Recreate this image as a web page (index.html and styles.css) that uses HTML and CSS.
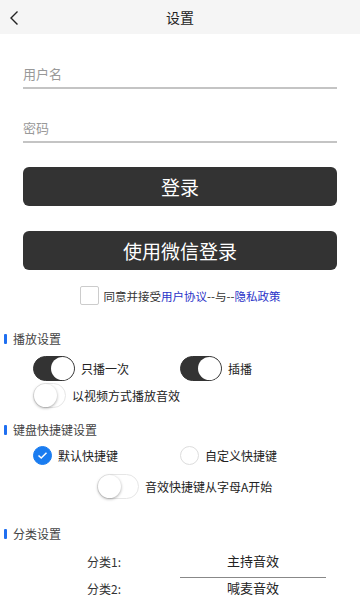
FILE: index.html
```html
<!DOCTYPE html>
<html lang="zh-CN">
<head>
  <meta charset="UTF-8">
  <meta name="viewport" content="width=device-width, initial-scale=1.0">
  <title>设置</title>
  <link rel="stylesheet" href="styles.css">
</head>
<body>

  <!-- Header -->
  <header class="topbar">
    <svg class="back" width="10" height="16" viewBox="0 0 10 16"><path d="M8.5 1.5 L2 8 L8.5 14.5" fill="none" stroke="#222" stroke-width="1.4"/></svg>
    <span class="title">设置</span>
  </header>

  <!-- Login -->
  <section class="login">
    <div class="field">用户名</div>
    <div class="field">密码</div>
    <button class="btn btn-login">登录</button>
    <button class="btn btn-wechat">使用微信登录</button>
    <div class="agree">
      <span class="box"></span>
      <span>同意并接受<a class="link">用户协议</a>--与--<a class="link">隐私政策</a></span>
    </div>
  </section>

  <!-- Play settings -->
  <section class="group">
    <h2 class="group-title">播放设置</h2>
    <div class="opts">
      <div class="opt"><span class="switch on"></span>只播一次</div>
      <div class="opt"><span class="switch on"></span>插播</div>
    </div>
    <div class="opts row2">
      <div class="opt"><span class="switch"></span>以视频方式播放音效</div>
    </div>
  </section>

  <!-- Shortcut settings -->
  <section class="group">
    <h2 class="group-title">键盘快捷键设置</h2>
    <div class="opts radios">
      <div class="opt"><span class="radio checked"><svg width="11" height="9" viewBox="0 0 11 9"><path d="M1.5 4.5 L4.2 7 L9.5 1.8" fill="none" stroke="#fff" stroke-width="1.5"/></svg></span>默认快捷键</div>
      <div class="opt"><span class="radio"></span>自定义快捷键</div>
    </div>
    <div class="opts letter">
      <div class="opt"><span class="switch"></span>音效快捷键从字母A开始</div>
    </div>
  </section>

  <!-- Category settings -->
  <section class="group cats">
    <h2 class="group-title">分类设置</h2>
    <div class="cat"><span class="cat-name">分类1:</span><span class="cat-val first">主持音效</span></div>
    <div class="cat"><span class="cat-name">分类2:</span><span class="cat-val">喊麦音效</span></div>
  </section>

</body>
</html>
```

FILE: styles.css
```css
body {
  margin: 0;
  font-family: "Noto Sans CJK SC", "Noto Sans", sans-serif;
  color: #333;
  background: #fff;
  width: 360px;
  overflow: hidden;
}
.topbar {
  position: relative;
  height: 34px;
  background: #f5f5f5;
  display: flex;
  align-items: center;
  justify-content: center;
}
.back {
  position: absolute;
  left: 9px;
  top: 10px;
}
.title {
  font-size: 14px;
  color: #222;
}
.login {
  padding: 0 23px;
}
.field {
  height: 26px;
  line-height: 26px;
  font-size: 13px;
  color: #999;
  border-bottom: 2px solid #c4c4c4;
  margin-top: 27px;
}
.field + .field {
  margin-top: 26px;
}
.btn {
  display: block;
  width: 100%;
  height: 39px;
  border: none;
  border-radius: 6px;
  background: #333;
  color: #fff;
  font-family: inherit;
  font-size: 19px;
  padding: 0;
}
.btn-login {
  margin-top: 24px;
}
.btn-wechat {
  margin-top: 25px;
}
.agree {
  display: flex;
  align-items: center;
  justify-content: center;
  gap: 5px;
  margin-top: 16px;
  font-size: 11.5px;
  color: #333;
}
.box {
  width: 17px;
  height: 17px;
  border: 1px solid #ccc;
  border-radius: 2px;
}
.link {
  color: #2b33c8;
}
.group-title {
  margin: 0;
  padding-left: 13px;
  position: relative;
  font-size: 12px;
  font-weight: normal;
  color: #444;
  line-height: 16px;
}
.group-title::before {
  content: "";
  position: absolute;
  left: 4px;
  top: 3px;
  width: 3px;
  height: 10px;
  border-radius: 1px;
  background: #1f6ff0;
}
.group {
  margin-top: 26px;
}
.group + .group {
  margin-top: 14px;
}
.opts {
  display: flex;
  padding-left: 33px;
  margin-top: 9px;
}
.opts.row2 {
  margin-top: 2px;
}
.opt {
  width: 147px;
  display: flex;
  align-items: center;
  gap: 6px;
  font-size: 12px;
  color: #222;
  white-space: nowrap;
}
.switch {
  position: relative;
  width: 42px;
  height: 25px;
  box-sizing: border-box;
  border-radius: 13px;
  border: 1px solid #e6e6e6;
  background: #fff;
}
.switch::after {
  content: "";
  position: absolute;
  top: 0;
  left: 0;
  width: 23px;
  height: 23px;
  border-radius: 50%;
  background: #fff;
  box-shadow: 0 1px 3px rgba(0, 0, 0, 0.35);
}
.switch.on {
  background: #333;
  border-color: #333;
}
.switch.on::after {
  left: auto;
  right: 0;
  box-shadow: none;
}
.radios {
  margin-top: 8px;
}
.radio {
  width: 19px;
  height: 19px;
  box-sizing: border-box;
  border-radius: 50%;
  border: 1px solid #ddd;
  display: flex;
  align-items: center;
  justify-content: center;
}
.radio.checked {
  background: #1a7cf0;
  border-color: #1a7cf0;
}
.letter {
  padding-left: 97px;
  margin-top: 9px;
}
.letter .opt {
  width: auto;
}
.group.cats {
  margin-top: 27px;
}
.cats .group-title {
  margin-bottom: 2px;
}
.cat {
  display: flex;
  align-items: center;
  font-size: 12px;
}
.cat-name {
  width: 93px;
  padding-left: 87px;
  color: #333;
}
.cat-val {
  width: 146px;
  text-align: center;
  font-size: 13px;
  color: #222;
  line-height: 20px;
}
.cat-val.first {
  line-height: 33px;
  border-bottom: 1px solid #888;
}
```
